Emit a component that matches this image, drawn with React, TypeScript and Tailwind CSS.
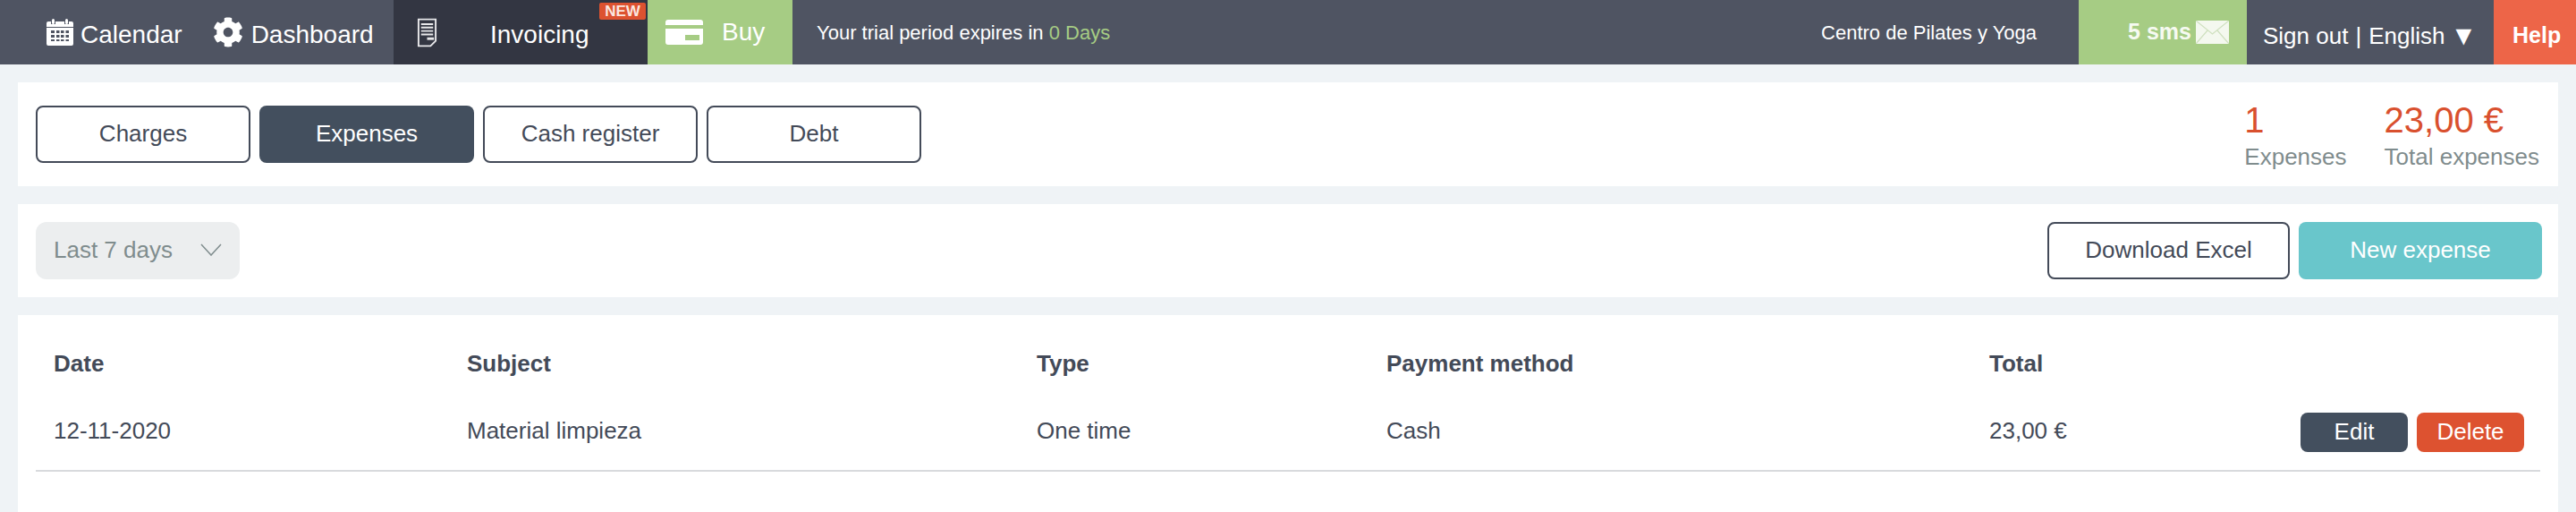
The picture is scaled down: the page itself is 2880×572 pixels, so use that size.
import { FaCog } from "react-icons/fa";

const font = "font-['Liberation_Sans',Arial,sans-serif]";

function CalendarIcon() {
  return (
    <svg width="30" height="30" viewBox="0 0 30 30" fill="#fff" className="shrink-0">
      <rect x="6" y="0" width="3" height="6" rx="1.5" />
      <rect x="21" y="0" width="3" height="6" rx="1.5" />
      <path d="M2 3h3v3h5V3h10v3h5V3h3a2 2 0 0 1 2 2v4H0V5a2 2 0 0 1 2-2z" />
      <path fillRule="evenodd" d="M0 10h30v18a2 2 0 0 1-2 2H2a2 2 0 0 1-2-2zM5 13v3h4v-3zm6 0v3h3.5v-3zm5 0v3h3.500v-3zm5.500 0v3H25v-3zM5 18v3h4v-3zm6 0v3h3.500v-3zm5 0v3h3.500v-3zm5.500 0v3H25v-3zM5 23v2h4v-2zm6 0v2h3.500v-2zm5 0v2h3.500v-2zm5.500 0v2H25v-2z" />
    </svg>
  );
}

function DocIcon() {
  return (
    <svg width="23" height="33" viewBox="0 0 24 34" fill="none" stroke="#e8e8ea" className="shrink-0">
      <path d="M2 1.500h20v25l-6 6H2z" strokeWidth="2" />
      <path d="M5 7h14M5 11h14M5 15h14M5 19h14" strokeWidth="2" />
      <path d="M12 24h8" strokeWidth="3" />
    </svg>
  );
}

function CardIcon() {
  return (
    <svg width="42" height="28" viewBox="0 0 42 28" className="shrink-0">
      <path d="M3 0h36a3 3 0 0 1 3 3v3H0V3a3 3 0 0 1 3-3z" fill="#fff" />
      <path fillRule="evenodd" d="M0 10h42v15a3 3 0 0 1-3 3H3a3 3 0 0 1-3-3zm22 7v6h16v-6z" fill="#fff" />
      <rect x="22" y="17" width="16" height="6" fill="#a6cc84" />
    </svg>
  );
}

function MailIcon() {
  return (
    <svg width="37" height="26" viewBox="0 0 37 26" className="shrink-0">
      <rect width="37" height="26" fill="#f4f8ef" />
      <path d="M0 0l18.500 15L37 0M0 26l13-15M37 26L24 11" fill="none" stroke="#cfe0bf" strokeWidth="1.200" />
    </svg>
  );
}

function Tab({ label, active }: { label: string; active?: boolean }) {
  return (
    <button
      className={
        active
          ? "w-[240px] h-16 rounded-lg bg-[#434f5e] text-white text-[26px] pb-[2px]"
          : "w-[240px] h-16 rounded-lg border-2 border-[#434a58] bg-white text-[#434a58] text-[26px] pb-[2px]"
      }
    >
      {label}
    </button>
  );
}

export default function App() {
  return (
    <div className={`${font} w-[2880px] h-[572px] overflow-hidden bg-[#eff3f6] text-[#434a58]`}>
      <header className="flex h-[72px] bg-[#4f5462] text-white">
        <div className="flex items-center w-[440px] shrink-0 pl-[52px] text-[28px] pt-[6px]">
          <div className="mb-[6px]"><CalendarIcon /></div>
          <span className="ml-[8px]">Calendar</span>
          <FaCog className="ml-[34px] mb-[6px] text-[34px]" />
          <span className="ml-[9px]">Dashboard</span>
        </div>
        <div className="relative flex items-center w-[284px] shrink-0 bg-[#333642] text-[28px] pl-[26px] pt-[6px]">
          <div className="mb-[6px]"><DocIcon /></div>
          <span className="ml-[59px]">Invoicing</span>
          <span className="absolute top-[3px] right-[2px] w-[52px] h-[19px] flex items-center justify-center bg-[#dd5230] rounded-[2px] text-[17px] leading-none font-bold text-[#fbe6df]">NEW</span>
        </div>
        <div className="flex items-center w-[162px] shrink-0 bg-[#a6cc84] pl-[20px] text-[28px]">
          <CardIcon />
          <span className="ml-[21px]">Buy</span>
        </div>
        <div className="flex items-center flex-1 pl-[27px] text-[22px]">
          <span>Your trial period expires in <span className="text-[#a6cc84]">0 Days</span></span>
          <span className="ml-auto mr-[47px]">Centro de Pilates y Yoga</span>
        </div>
        <div className="flex items-center justify-end w-[188px] shrink-0 bg-[#a6cc84] pr-[20px] font-bold text-[25px] text-[#f6faf1]">
          <span className="mr-[5px]">5 sms</span>
          <MailIcon />
        </div>
        <div className="flex items-center w-[276px] shrink-0 pl-[18px] text-[26px] pt-[8px]">
          <span>Sign out</span>
          <span className="ml-[8px]">|</span>
          <span className="ml-[8px]">English</span>
          <span className="ml-[6px] text-[30px] leading-none">▼</span>
        </div>
        <div className="flex items-center w-[92px] shrink-0 bg-[#ed6548] pl-[21px] font-bold text-[25px] pt-[8px]">Help</div>
      </header>

      <main className="flex flex-col gap-5 pt-5 px-5">
        <section className="flex items-start justify-between h-[116px] bg-white px-5 pt-[26px]">
          <div className="flex gap-[10px]">
            <Tab label="Charges" />
            <Tab label="Expenses" active />
            <Tab label="Cash register" />
            <Tab label="Debt" />
          </div>
          <div className="flex gap-[42px] -mt-[10px] mr-[1px]">
            <div className="flex flex-col">
              <span className="text-[40px] leading-[52px] text-[#d9502e]">1</span>
              <span className="text-[26px] leading-[30px] text-[#7f8c8d]">Expenses</span>
            </div>
            <div className="flex flex-col">
              <span className="text-[40px] leading-[52px] text-[#d9502e]">23,00 €</span>
              <span className="text-[26px] leading-[30px] text-[#7f8c8d]">Total expenses</span>
            </div>
          </div>
        </section>

        <section className="flex items-center justify-between h-[104px] bg-white px-5">
          <div className="flex items-center w-[228px] h-16 rounded-xl bg-[#eceeef] pl-5 pb-[2px] text-[26px] text-[#7f8c8d]">
            <span>Last 7 days</span>
            <svg width="24" height="14" viewBox="0 0 24 14" fill="none" stroke="#7f8c8d" strokeWidth="1.500" className="ml-[31px]">
              <path d="M1 1l11 12L23 1" />
            </svg>
          </div>
          <div className="flex gap-[10px] -mr-[2px]">
            <button className="w-[271px] h-16 rounded-lg border-2 border-[#434a58] bg-white text-[26px] pb-[2px]">Download Excel</button>
            <button className="w-[272px] h-16 rounded-lg bg-[#69c6cb] text-white text-[26px] pb-[2px]">New expense</button>
          </div>
        </section>

        <section className="bg-white px-5 h-[220px]">
          <div className="grid grid-cols-[462px_637px_391px_674px_1fr] pl-5 pt-[35px] h-[84px] text-[26px] font-bold">
            <span>Date</span>
            <span>Subject</span>
            <span>Type</span>
            <span>Payment method</span>
            <span>Total</span>
          </div>
          <div className="grid grid-cols-[462px_637px_391px_674px_1fr] items-center pl-5 pt-[5px] h-[91px] border-b-2 border-[#d8dadd] text-[26px]">
            <span className="-translate-y-[2px]">12-11-2020</span>
            <span className="-translate-y-[2px]">Material limpieza</span>
            <span className="-translate-y-[2px]">One time</span>
            <span className="-translate-y-[2px]">Cash</span>
            <div className="flex items-center justify-between">
              <span className="-translate-y-[2px]">23,00 €</span>
              <div className="flex gap-[10px] mr-[18px]">
                <button className="w-[120px] h-[44px] rounded-lg bg-[#434f5e] text-white pb-[2px]">Edit</button>
                <button className="w-[120px] h-[44px] rounded-lg bg-[#dd5230] text-white pb-[2px]">Delete</button>
              </div>
            </div>
          </div>
        </section>
      </main>
    </div>
  );
}
